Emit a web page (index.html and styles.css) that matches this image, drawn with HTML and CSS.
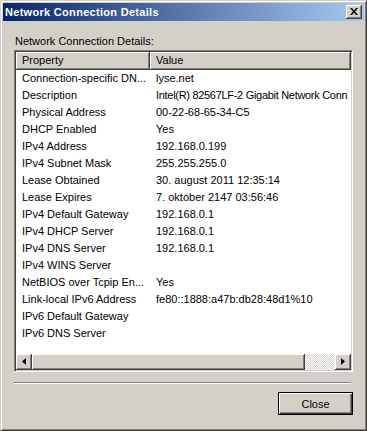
FILE: index.html
```html
<!DOCTYPE html>
<html>
<head>
<meta charset="utf-8">
<link rel="stylesheet" href="styles.css">
</head>
<body>
<div class="window">
  <div class="titlebar">
    <span class="title">Network Connection Details</span>
    <span class="close-btn"><svg width="8" height="7" viewBox="0 0 8 7"><path d="M0 0h2l2 2.5L6 0h2L5 3.5 8 7H6L4 4.5 2 7H0l3-3.5z" fill="#000"/></svg></span>
  </div>
  <div class="content">
    <div class="label">Network Connection Details:</div>
    <div class="list">
      <div class="header">
        <div class="hcell prop">Property</div>
        <div class="hcell val">Value</div>
      </div>
      <div class="rows">
        <div class="row"><span>Connection-specific DN...</span><span>lyse.net</span></div>
        <div class="row"><span>Description</span><span class="tight">Intel(R) 82567LF-2 Gigabit Network Conn</span></div>
        <div class="row"><span>Physical Address</span><span>00-22-68-65-34-C5</span></div>
        <div class="row"><span>DHCP Enabled</span><span>Yes</span></div>
        <div class="row"><span>IPv4 Address</span><span>192.168.0.199</span></div>
        <div class="row"><span>IPv4 Subnet Mask</span><span>255.255.255.0</span></div>
        <div class="row"><span>Lease Obtained</span><span>30. august 2011 12:35:14</span></div>
        <div class="row"><span>Lease Expires</span><span>7. oktober 2147 03:56:46</span></div>
        <div class="row"><span>IPv4 Default Gateway</span><span>192.168.0.1</span></div>
        <div class="row"><span>IPv4 DHCP Server</span><span>192.168.0.1</span></div>
        <div class="row"><span>IPv4 DNS Server</span><span>192.168.0.1</span></div>
        <div class="row"><span>IPv4 WINS Server</span><span></span></div>
        <div class="row"><span>NetBIOS over Tcpip En...</span><span>Yes</span></div>
        <div class="row"><span>Link-local IPv6 Address</span><span>fe80::1888:a47b:db28:48d1%10</span></div>
        <div class="row"><span>IPv6 Default Gateway</span><span></span></div>
        <div class="row"><span>IPv6 DNS Server</span><span></span></div>
      </div>
      <div class="hscroll">
        <div class="sbtn"><svg width="4" height="7" viewBox="0 0 4 7"><path d="M4 0v7L0 3.5z" fill="#000"/></svg></div>
        <div class="thumb"></div>
        <div class="track"></div>
        <div class="sbtn"><svg width="4" height="7" viewBox="0 0 4 7"><path d="M0 0v7l4-3.5z" fill="#000"/></svg></div>
      </div>
    </div>
    <div class="separator"></div>
    <div class="buttons">
      <div class="button">Close</div>
    </div>
  </div>
</div>
</body>
</html>
```

FILE: styles.css
```css
html, body {
  margin: 0;
  padding: 0;
  background: #d4d0c8;
}
body {
  font-family: "Liberation Sans", Arial, sans-serif;
  font-size: 11px;
  color: #000;
}
.window {
  box-sizing: border-box;
  width: 367px;
  height: 431px;
  background: #d4d0c8;
  border: 1px solid;
  border-color: #d4d0c8 #404040 #404040 #d4d0c8;
  box-shadow: inset 1px 1px #fff, inset -1px -1px #808080;
  padding: 2px;
  display: flex;
  flex-direction: column;
}
.titlebar {
  height: 18px;
  flex: none;
  background: linear-gradient(to right, #0a246a, #a6caf0);
  display: flex;
  align-items: center;
  justify-content: space-between;
  padding: 0 2px 0 2px;
}
.title {
  color: #fff;
  font-weight: bold;
  font-size: 11px;
  letter-spacing: 0.3px;
}
.close-btn {
  box-sizing: border-box;
  width: 16px;
  height: 14px;
  background: #d4d0c8;
  border-right: 1px solid #404040;
  border-bottom: 1px solid #404040;
  box-shadow: inset 1px 1px #fff, inset -1px -1px #808080;
  display: flex;
  align-items: center;
  justify-content: center;
  padding-left: 1px;
}
.content {
  flex: 1;
  display: flex;
  flex-direction: column;
  padding: 14px 11px 0 11px;
}
.label {
  line-height: 13px;
  padding-left: 1px;
}
.list {
  margin-top: 2px;
  height: 322px;
  box-sizing: border-box;
  border: 1px solid;
  border-color: #808080 #fff #fff #808080;
  box-shadow: inset 1px 1px #404040, inset -1px -1px #d4d0c8;
  padding: 1px;
  background: #fff;
  display: flex;
  flex-direction: column;
}
.header {
  display: flex;
  height: 18px;
  flex: none;
}
.hcell {
  box-sizing: border-box;
  height: 18px;
  background: #d4d0c8;
  border-right: 1px solid #404040;
  border-bottom: 1px solid #404040;
  box-shadow: inset 1px 1px #fff, inset -1px -1px #808080;
  padding-left: 6px;
  line-height: 17px;
}
.hcell.prop {
  width: 134px;
}
.hcell.val {
  flex: 1;
}
.rows {
  flex: 1;
  overflow: hidden;
}
.row {
  display: grid;
  grid-template-columns: 134px 1fr;
  height: 17px;
  line-height: 17px;
  white-space: nowrap;
}
.row span {
  padding-left: 6px;
  overflow: hidden;
}
.row span.tight {
  letter-spacing: -0.3px;
}
.hscroll {
  height: 16px;
  flex: none;
  display: flex;
}
.sbtn {
  box-sizing: border-box;
  width: 16px;
  height: 16px;
  background: #d4d0c8;
  border-right: 1px solid #404040;
  border-bottom: 1px solid #404040;
  box-shadow: inset 1px 1px #fff, inset -1px -1px #808080;
  display: flex;
  align-items: center;
  justify-content: center;
}
.thumb {
  box-sizing: border-box;
  width: 273px;
  height: 16px;
  background: #d4d0c8;
  border-right: 1px solid #404040;
  border-bottom: 1px solid #404040;
  box-shadow: inset 1px 1px #fff, inset -1px -1px #808080;
}
.track {
  flex: 1;
  height: 16px;
  background-color: #d4d0c8;
  background-image: conic-gradient(#fff 25%, #d4d0c8 0 50%, #fff 0 75%, #d4d0c8 0);
  background-size: 2px 2px;
}
.separator {
  margin-top: 10px;
  height: 1px;
  border-top: 1px solid #808080;
  background: #fff;
  margin-right: 2px;
}
.buttons {
  display: flex;
  justify-content: flex-end;
  margin-top: 8px;
}
.button {
  box-sizing: border-box;
  width: 75px;
  height: 23px;
  border: 1px solid #000;
  background: #d4d0c8;
  box-shadow: inset 1px 1px #fff, inset -1px -1px #404040, inset -2px -2px #808080;
  display: flex;
  align-items: center;
  justify-content: center;
}
```
